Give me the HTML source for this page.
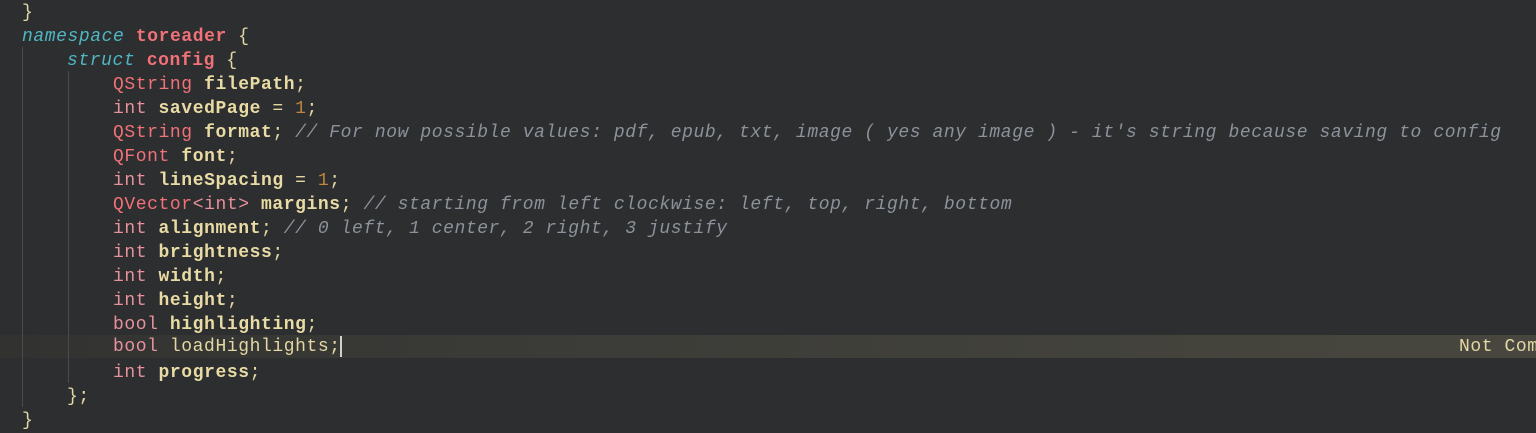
<!DOCTYPE html>
<html><head><meta charset="utf-8"><style>
html,body{margin:0;padding:0;}
body{width:1536px;height:428px;background:#2d2e30;overflow:hidden;position:relative;font-family:"Liberation Mono",monospace;font-size:18px;letter-spacing:0.58px;}
.l{position:absolute;left:0;height:24px;line-height:24px;white-space:pre;color:#e3d7a3;}
.hl{position:absolute;left:0;top:335px;width:1536px;height:23px;background:linear-gradient(90deg,#323231,#3c3c38 40%,#48473f);}
.g{position:absolute;width:1px;background:#4a4b4d;}
.k{color:#4fb6c2;font-style:italic}
.n{color:#f07178;font-weight:bold}
.t{color:#f07178}
.p{color:#e8909c}
.b{color:#e8dba4;font-weight:bold}
.c{color:#8b929a;font-style:italic}
.num{color:#c1863d}
.cur{display:inline-block;width:2px;height:21px;background:#d0d0d0;vertical-align:middle;margin-left:-1px}
</style></head><body>
<div class="hl"></div>
<div class="g" style="left:22px;top:47px;height:360px"></div>
<div class="g" style="left:68px;top:71px;height:312px"></div>
<div class="l" style="top:1px;left:22px">}</div>
<div class="l" style="top:25px;left:22px"><span class="k">namespace</span> <span class="n">toreader</span> {</div>
<div class="l" style="top:49px;left:67px"><span class="k">struct</span> <span class="n">config</span> {</div>
<div class="l" style="top:73px;left:113px"><span class="t">QString</span> <span class="b">filePath</span>;</div>
<div class="l" style="top:97px;left:113px"><span class="p">int</span> <span class="b">savedPage</span> = <span class="num">1</span>;</div>
<div class="l" style="top:121px;left:113px"><span class="t">QString</span> <span class="b">format</span>; <span class="c">// For now possible values: pdf, epub, txt, image ( yes any image ) - it's string because saving to config</span></div>
<div class="l" style="top:145px;left:113px"><span class="t">QFont</span> <span class="b">font</span>;</div>
<div class="l" style="top:169px;left:113px"><span class="p">int</span> <span class="b">lineSpacing</span> = <span class="num">1</span>;</div>
<div class="l" style="top:193px;left:113px"><span class="t">QVector</span><span class="p">&lt;int&gt;</span> <span class="b">margins</span>; <span class="c">// starting from left clockwise: left, top, right, bottom</span></div>
<div class="l" style="top:217px;left:113px"><span class="p">int</span> <span class="b">alignment</span>; <span class="c">// 0 left, 1 center, 2 right, 3 justify</span></div>
<div class="l" style="top:241px;left:113px"><span class="p">int</span> <span class="b">brightness</span>;</div>
<div class="l" style="top:265px;left:113px"><span class="p">int</span> <span class="b">width</span>;</div>
<div class="l" style="top:289px;left:113px"><span class="p">int</span> <span class="b">height</span>;</div>
<div class="l" style="top:313px;left:113px"><span class="p">bool</span> <span class="b">highlighting</span>;</div>
<div class="l" style="top:335px;left:113px"><span class="p">bool</span> loadHighlights;<span class="cur"></span></div>
<div class="l" style="top:335px;left:1459px">Not Com</div>
<div class="l" style="top:361px;left:113px"><span class="p">int</span> <span class="b">progress</span>;</div>
<div class="l" style="top:385px;left:67px">};</div>
<div class="l" style="top:409px;left:22px">}</div>
</body></html>
